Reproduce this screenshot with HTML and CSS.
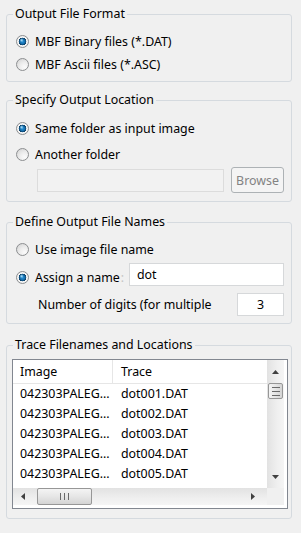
FILE: index.html
```html
<!DOCTYPE html>
<html lang="en">
<head>
    <meta charset="UTF-8">
    <meta name="viewport" content="width=device-width, initial-scale=1.0">
    <title>Trace Output</title>
    <link rel="stylesheet" href="styles.css">
</head>
<body>
    <fieldset class="group group-format">
        <legend>Output File Format</legend>
        <div class="option"><span class="radio checked"></span>MBF Binary files (*.DAT)</div>
        <div class="option"><span class="radio"></span>MBF Ascii files (*.ASC)</div>
    </fieldset>

    <fieldset class="group group-location">
        <legend>Specify Output Location</legend>
        <div class="option"><span class="radio checked"></span>Same folder as input image</div>
        <div class="option"><span class="radio"></span>Another folder</div>
        <div class="folder-row">
            <input class="field field-folder" type="text" disabled>
            <button class="browse" disabled>Browse</button>
        </div>
    </fieldset>

    <fieldset class="group group-names">
        <legend>Define Output File Names</legend>
        <div class="option"><span class="radio"></span>Use image file name</div>
        <div class="name-row">
            <div class="option"><span class="radio checked"></span>Assign a name<span class="colon">:</span></div>
            <input class="field field-name" type="text" value="dot">
        </div>
        <div class="digits-row">
            <span>Number of digits (for multiple</span>
            <input class="field field-digits" type="text" value="3">
        </div>
    </fieldset>

    <fieldset class="group group-trace">
        <legend>Trace Filenames and Locations</legend>
        <div class="listbox">
            <div class="table">
                <div class="thead">
                    <span class="col-image">Image</span>
                    <span class="col-trace">Trace</span>
                </div>
                <div class="row"><span class="col-image">042303PALEG...</span><span class="col-trace">dot001.DAT</span></div>
                <div class="row"><span class="col-image">042303PALEG...</span><span class="col-trace">dot002.DAT</span></div>
                <div class="row"><span class="col-image">042303PALEG...</span><span class="col-trace">dot003.DAT</span></div>
                <div class="row"><span class="col-image">042303PALEG...</span><span class="col-trace">dot004.DAT</span></div>
                <div class="row"><span class="col-image">042303PALEG...</span><span class="col-trace">dot005.DAT</span></div>
            </div>

            <div class="vscroll">
                <div class="arrow arrow-up">
                    <svg width="7" height="4" viewBox="0 0 7 4"><path d="M0 4L3.5 0L7 4Z" fill="#404040"/></svg>
                </div>
                <div class="thumb thumb-v">
                    <svg width="8" height="9" viewBox="0 0 8 9">
                        <rect x="0" y="0" width="8" height="1" fill="#6a6a6a"/>
                        <rect x="0" y="4" width="8" height="1" fill="#6a6a6a"/>
                        <rect x="0" y="8" width="8" height="1" fill="#6a6a6a"/>
                    </svg>
                </div>
                <div class="arrow arrow-down">
                    <svg width="7" height="4" viewBox="0 0 7 4"><path d="M0 0L7 0L3.5 4Z" fill="#404040"/></svg>
                </div>
            </div>

            <div class="hscroll">
                <div class="arrow arrow-left">
                    <svg width="4" height="7" viewBox="0 0 4 7"><path d="M4 0L4 7L0 3.5Z" fill="#404040"/></svg>
                </div>
                <div class="thumb thumb-h">
                    <svg width="9" height="7" viewBox="0 0 9 7">
                        <rect x="0" y="0" width="1" height="7" fill="#6a6a6a"/>
                        <rect x="4" y="0" width="1" height="7" fill="#6a6a6a"/>
                        <rect x="8" y="0" width="1" height="7" fill="#6a6a6a"/>
                    </svg>
                </div>
                <div class="arrow arrow-right">
                    <svg width="4" height="7" viewBox="0 0 4 7"><path d="M0 0L4 3.5L0 7Z" fill="#404040"/></svg>
                </div>
            </div>

            <div class="corner"></div>
        </div>
    </fieldset>
</body>
</html>
```

FILE: styles.css
```css
/* General */
* {
    box-sizing: border-box;
}

body {
    margin: 0;
    padding: 6px 9px 0 6px;
    background: #f0f0f0;
    font-family: "Noto Sans", sans-serif;
    font-size: 12.4px;
    color: #000;
}

/* Group boxes */
.group {
    margin: 0;
    min-width: 0;
    border: 1px solid #d5dadf;
    border-radius: 3px;
    padding: 0 7px 0 5px;
}

.group legend {
    margin-left: 1px;
    padding: 0 2px;
    line-height: 16px;
}

.group-format {
    padding-top: 8px;
    padding-bottom: 5px;
}

.group-location {
    margin-top: 10px;
    padding-top: 7px;
    padding-bottom: 8px;
}

.group-names {
    margin-top: 12px;
    padding-top: 7px;
    padding-bottom: 7px;
}

.group-trace {
    margin-top: 13px;
    padding: 6px 3px 9px 5px;
}

/* Radio options */
.option {
    display: flex;
    align-items: center;
    height: 23px;
    white-space: nowrap;
}

.group-location .option {
    height: 26px;
}

.group-names > .option {
    height: 24px;
}

.radio {
    flex: none;
    width: 13px;
    height: 13px;
    margin: 0 6px 0 4px;
    border: 1px solid #8c8e90;
    border-radius: 50%;
    background: radial-gradient(circle at 70% 75%, #fbfbfb 0, #ececec 45%, #cfcfcf 100%);
}

.radio.checked {
    background:
        radial-gradient(circle at 42% 38%, rgba(190, 235, 255, 0.95) 0, rgba(120, 200, 255, 0) 2px),
        radial-gradient(circle, #2b93d6 0, #1672b3 2.2px, #0b3f66 3.6px, #f7f7f7 4.1px, #e4e4e4 100%);
}

.colon {
    color: #c4c4c4;
    margin-left: 1px;
}

/* Text fields */
.field {
    height: 23px;
    border: 1px solid #d6d8da;
    background: #fff;
    font: inherit;
    color: #000;
    padding: 0 7px;
    outline: none;
}

.folder-row {
    display: flex;
    align-items: center;
    gap: 7px;
    height: 26px;
    padding-left: 25px;
}

.field-folder {
    width: 187px;
    background: #f2f2f2;
    border-color: #dcdcdc;
}

.browse {
    width: 53px;
    height: 26px;
    padding: 0;
    border: 1px solid #adb2b5;
    border-radius: 3px;
    background: #f4f4f4;
    font: inherit;
    color: #838383;
}

.name-row {
    display: flex;
    align-items: center;
    height: 23px;
    margin-top: 2px;
}

.name-row .option {
    padding-top: 5px;
}

.field-name {
    width: 155px;
    margin-left: auto;
}

.digits-row {
    display: flex;
    align-items: center;
    height: 23px;
    margin-top: 7px;
    padding-left: 26px;
    white-space: nowrap;
}

.field-digits {
    width: 47px;
    margin-left: auto;
    text-align: center;
}

/* List box */
.listbox {
    display: grid;
    grid-template-columns: 1fr 17px;
    grid-template-rows: 1fr 17px;
    height: 150px;
    border: 1px solid #828790;
    background: #fff;
    padding: 0 3px 3px 0;
}

.table {
    overflow: hidden;
    white-space: nowrap;
}

.thead {
    display: flex;
    height: 24px;
    line-height: 23px;
    border-bottom: 1px solid #e6e6e6;
}

.thead .col-image {
    border-right: 1px solid #e6e6e6;
}

.row {
    display: flex;
    height: 20px;
    line-height: 20px;
}

.col-image {
    flex: none;
    width: 100px;
    padding-left: 7px;
}

.col-trace {
    padding-left: 8px;
}

/* Scroll bars */
.vscroll {
    display: flex;
    flex-direction: column;
    background: linear-gradient(to right, #e2e2e2, #efefef 60%, #f5f5f5);
}

.hscroll {
    display: flex;
    align-items: stretch;
    background: linear-gradient(to bottom, #e2e2e2, #efefef 60%, #f5f5f5);
}

.corner {
    background: #f0f0f0;
}

.arrow {
    display: flex;
    align-items: center;
    justify-content: center;
    flex: none;
}

.arrow-up {
    height: 23px;
}

.arrow-down {
    height: 17px;
    margin-top: auto;
    margin-bottom: 3px;
}

.arrow-left {
    width: 20px;
}

.arrow-right {
    width: 17px;
    margin-left: auto;
    margin-right: 6px;
}

.thumb {
    display: flex;
    align-items: center;
    justify-content: center;
    flex: none;
    border: 1px solid #979797;
    border-radius: 2px;
}

.thumb-v {
    height: 16px;
    margin: 0 1px;
    background: linear-gradient(to right, #f4f4f4, #e6e6e6 50%, #d4d4d4);
}

.thumb-h {
    width: 55px;
    margin-left: 4px;
    background: linear-gradient(to bottom, #f4f4f4, #e6e6e6 50%, #d4d4d4);
}
```
